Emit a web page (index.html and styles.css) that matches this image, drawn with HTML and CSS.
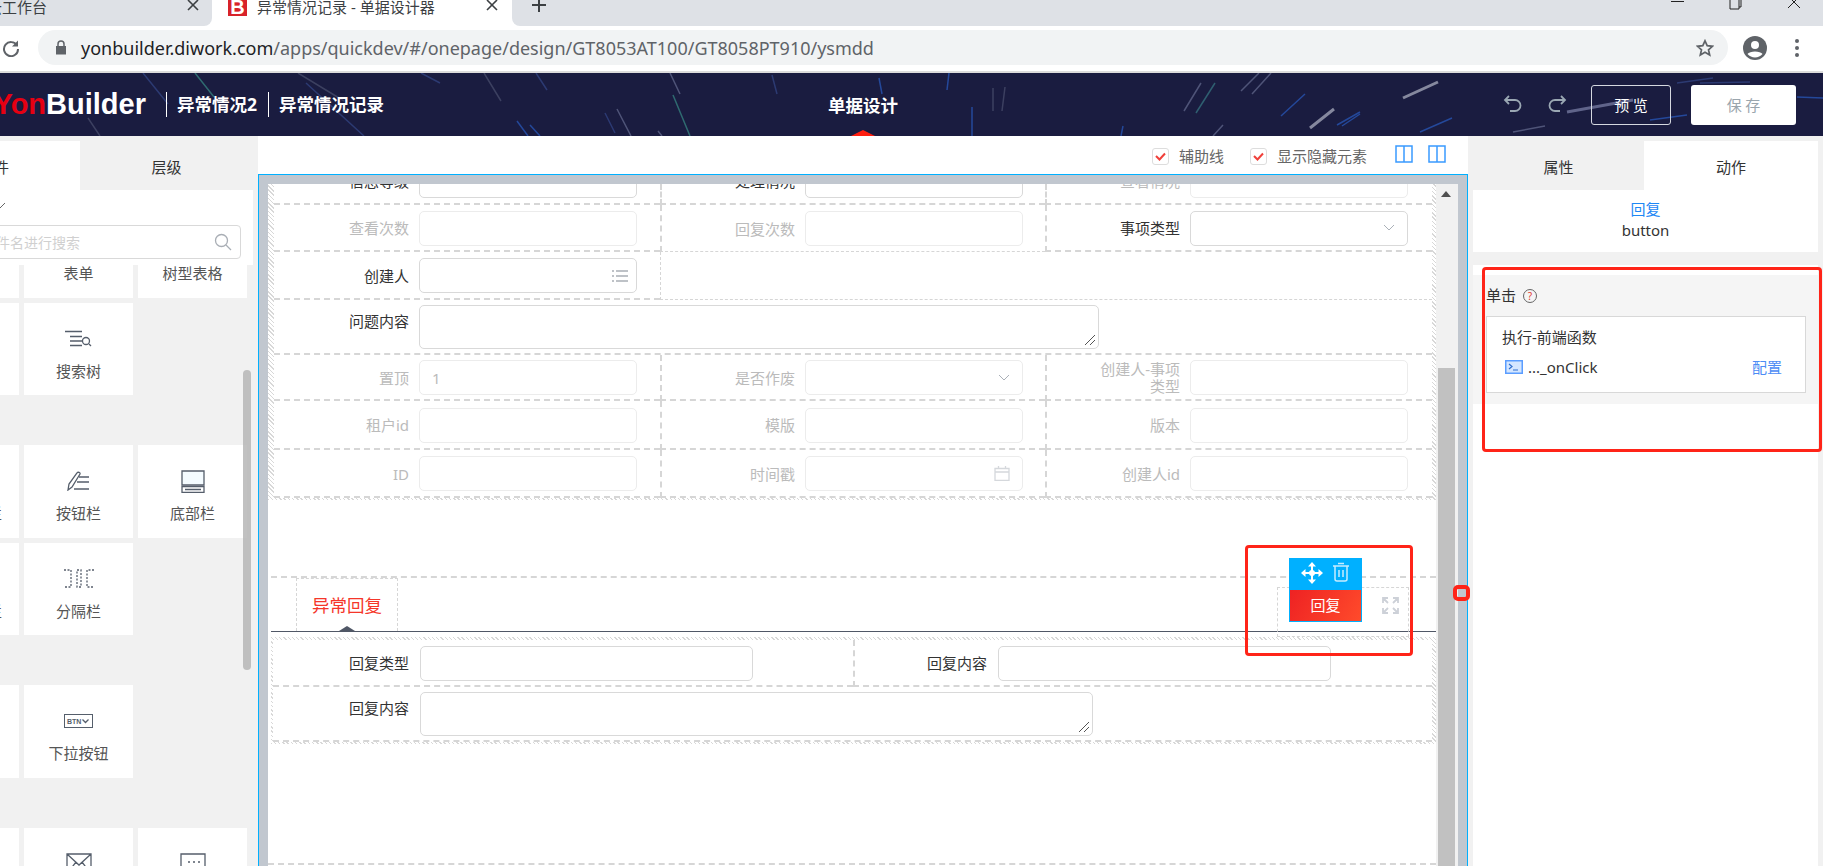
FILE: index.html
```html
<!DOCTYPE html>
<html lang="en">
<head>
    <meta charset="UTF-8">
    <title>异常情况记录 - 单据设计器</title>
    <link rel="stylesheet" href="styles.css">
</head>
<body>
    <!-- browser chrome -->
    <div class="tabstrip">
        <div class="tab-old">
            <span class="tab-old-text">云工作台</span>
            <svg class="tab-x" width="12" height="12" viewBox="0 0 12 12"><path d="M1 1l10 10M11 1L1 11"/></svg>
        </div>
        <div class="tab-on">
            <span class="favicon">B</span>
            <span class="tab-title">异常情况记录 - 单据设计器</span>
            <svg class="tab-x" width="12" height="12" viewBox="0 0 12 12"><path d="M1 1l10 10M11 1L1 11"/></svg>
        </div>
        <div class="tab-rest">
            <svg class="tab-plus" width="16" height="16" viewBox="0 0 16 16"><path d="M8 1v14M1 8h14"/></svg>
            <div class="win-btns">
                <svg width="14" height="8" viewBox="0 0 14 8"><path d="M0 1.500h13"/></svg>
                <svg width="14" height="10" viewBox="0 0 14 10"><path d="M1 0v9h9V0M10 7h2V0"/></svg>
                <svg width="14" height="9" viewBox="0 0 14 9"><path d="M1 -4l12 12M13 -4L1 8"/></svg>
            </div>
        </div>
    </div>
    <div class="addr-row">
        <svg class="reload" width="18" height="18" viewBox="0 0 18 18"><path d="M15 6.500A7 7 0 1 0 16 10" /><path class="solid" d="M16 1.500v6h-6z"/></svg>
        <div class="addr-bar">
            <svg width="12" height="15" viewBox="0 0 12 15" class="lock"><path d="M1 6h10v8.500H1z"/><path class="ring" d="M3 6V4a3 3 0 0 1 6 0v2"/></svg>
            <span class="url"><b>yonbuilder.diwork.com</b>/apps/quickdev/#/onepage/design/GT8053AT100/GT8058PT910/ysmdd</span>
            <svg class="star" width="18" height="18" viewBox="0 0 18 18"><path d="M9 1.800l2.200 4.900 5.300.6-4 3.500 1.200 5.200L9 13.300 4.300 16l1.200-5.200-4-3.500 5.300-.6z"/></svg>
        </div>
        <svg class="avatar" width="24" height="24" viewBox="0 0 24 24"><circle cx="12" cy="12" r="12" fill="#5f6368"/><circle cx="12" cy="9" r="4" fill="#fff"/><path d="M4.500 18c2-3.400 13-3.400 15 0a10 10 0 0 1-15 0z" fill="#fff"/></svg>
        <div class="dots"><i></i><i></i><i></i></div>
    </div>

    <!-- app header -->
    <header class="app-head">
        <svg class="streaks" width="1823" height="63" viewBox="0 0 1823 63">
            <g fill="none" stroke-width="1.500">
                <path stroke="#2c3a72" d="M143 0l25 31M306 10l58 53M421 0l19 10M536 0l11 17M605 40l10 20M772 2l5 19"/>
                <path stroke="#2f6a70" d="M195 0l19 24M673 22l17 41"/>
                <path stroke="#3c4060" d="M88 45l12 18M298 0l46 28M484 0l17 28M993 15v23M1005 14l-3 24"/>
                <path stroke="#24489a" d="M517 48l11 15M530 52l10 11M879 5l3 16M949 0l-2 17M972 34v29M1123 53l-2 10M1305 21l-24 22M1360 41l-18 12M1360 39l-23 13M1452 45l-32 14M1687 42l-37 5M1823 25l-26-1"/>
                <path stroke="#4f5478" d="M670 0l10 21M617 36l14 27M658 58l4 5M1201 10l-17 28M1259 0l-18 18M1271 0l-19 21M1223 52l-10 11M1545 53l-32 6"/>
                <path stroke="#2f5f70" d="M1215 10l-19 30"/>
                <path stroke="#2c3a72" d="M1713 5l-36 5M1750 9l-50 1"/>
                <path stroke="#85889e" stroke-width="3" d="M1334 36l-24 19M1438 9l-35 16"/>
                <path stroke="#60648a" stroke-width="3" d="M1633 27l-66 12"/>
            </g>
        </svg>
        <div class="head-left">
            <div class="logo"><span class="logo-red">Yon</span>Builder</div>
            <div class="crumb">异常情况2</div>
            <div class="crumb">异常情况记录</div>
        </div>
        <div class="head-title">单据设计<span class="title-mark"></span></div>
        <div class="head-right">
            <svg class="undo" width="20" height="20" viewBox="0 0 20 20"><path d="M6 1L2 5l4 4M2 5h10a5.500 5.500 0 0 1 0 11H7"/></svg>
            <svg class="undo redo" width="20" height="20" viewBox="0 0 20 20"><path d="M14 1l4 4-4 4M18 5H8a5.500 5.500 0 0 0 0 11h5"/></svg>
            <button class="btn-ghost">预 览</button>
            <button class="btn-save">保 存</button>
        </div>
    </header>

    <div class="main">
        <!-- left palette -->
        <aside class="left">
            <div class="l-tabs">
                <div class="l-tab on"><span class="l-tab-cut">组件</span></div>
                <div class="l-tab">层级</div>
            </div>
            <div class="l-top">
                <svg class="l-chev" width="8" height="8" viewBox="0 0 8 8"><path d="M-3 2l3 4 5-5"/></svg>
                <div class="search">
                    <span class="search-text">输入组件名进行搜索</span>
                    <svg width="18" height="18" viewBox="0 0 18 18"><circle cx="7.500" cy="7.500" r="6"/><path d="M12 12l5 5"/></svg>
                </div>
            </div>
            <div class="palette">
                <div class="pal-scroll">
                    <div class="pal-grid">
                        <div class="pal"></div><div class="pal"><span class="pal-ico"></span><span>表单</span></div><div class="pal"><span class="pal-ico"></span><span>树型表格</span></div>
                        <div class="pal"></div>
                        <div class="pal">
                            <span class="pal-ico"><svg width="28" height="18" viewBox="0 0 28 18"><path d="M0 1.500h17M5 6.500h12M5 11h12M5 15.500h12"/><circle cx="21" cy="11" r="3.500"/><path d="M24 14l2 2"/></svg></span>
                            <span>搜索树</span>
                        </div>
                        <div class="pal-empty"></div>
                    </div>
                    <div class="pal-grid sect">
                        <div class="pal"><span class="pal-ico"></span><span>卡片工具栏</span></div>
                        <div class="pal">
                            <span class="pal-ico"><svg width="23" height="20" viewBox="0 0 23 20"><path d="M1 19l1-6L10 2c1-1.500 3.500-.5 3 1L5 16z"/><path d="M12 6h10M10 11h12M7 18h15"/></svg></span>
                            <span>按钮栏</span>
                        </div>
                        <div class="pal">
                            <span class="pal-ico"><svg width="24" height="23" viewBox="0 0 24 23"><path class="pane" d="M1 1h22v14H1z"/><path d="M1 16.500h22v6H1zM4 19.500h16"/></svg></span>
                            <span>底部栏</span>
                        </div>
                        <div class="pal"><span class="pal-ico"></span><span>列表工具栏</span></div>
                        <div class="pal">
                            <span class="pal-ico"><svg class="dash" width="30" height="19" viewBox="0 0 30 19"><path d="M0 1h7v17H0M13 1h4v17h-4zM30 1h-7v17h7"/></svg></span>
                            <span>分隔栏</span>
                        </div>
                        <div class="pal-empty"></div>
                    </div>
                    <div class="pal-grid sect">
                        <div class="pal"></div>
                        <div class="pal">
                            <span class="pal-ico">
                                <span class="btn-ico">BTN<svg width="7" height="5" viewBox="0 0 7 5"><path d="M.500.500l3 3 3-3"/></svg></span>
                            </span>
                            <span>下拉按钮</span>
                        </div>
                        <div class="pal-empty"></div>
                    </div>
                    <div class="pal-grid sect">
                        <div class="pal"></div>
                        <div class="pal"><span class="pal-ico"><svg width="26" height="22" viewBox="0 0 26 22"><path d="M1 1h24v20H1zM1 1l12 11L25 1M1 21l9-12M25 21l-9-12"/></svg></span></div>
                        <div class="pal"><span class="pal-ico"><svg width="26" height="22" viewBox="0 0 26 22"><path d="M1 21V1h24v20"/><path d="M8 9h2M13 9h2M18 9h2"/></svg></span></div>
                    </div>
                </div>
                <div class="pal-bar"></div>
            </div>
        </aside>

        <!-- design canvas -->
        <section class="center">
            <div class="toolbar">
                <span class="chk"><svg width="11" height="9" viewBox="0 0 11 9"><path d="M1 4l3.500 3.500L10 1.500"/></svg></span>
                <span class="chk-label">辅助线</span>
                <span class="chk second"><svg width="11" height="9" viewBox="0 0 11 9"><path d="M1 4l3.500 3.500L10 1.500"/></svg></span>
                <span class="chk-label">显示隐藏元素</span>
                <svg class="split first" width="18" height="18" viewBox="0 0 18 18"><path d="M1 1h16v16H1zM9 1v16"/></svg>
                <svg class="split" width="18" height="18" viewBox="0 0 18 18"><path d="M1 1h16v16H1zM9 1v16"/></svg>
            </div>
            <div class="canvas">
                <div class="canvas-in">
                    <div class="sheet">
                        <div class="hatch">
                            <div class="frow">
                                <div class="cell"><span class="lbl">信息等级</span><div class="inp"></div></div>
                                <div class="cell"><span class="lbl">处理情况</span><div class="inp"></div></div>
                                <div class="cell"><span class="lbl off">查看情况</span><div class="inp off"></div></div>
                            </div>
                            <div class="frow">
                                <div class="cell"><span class="lbl off">查看次数</span><div class="inp off"></div></div>
                                <div class="cell thin-b"><span class="lbl off">回复次数</span><div class="inp off"></div></div>
                                <div class="cell">
                                    <span class="lbl">事项类型</span>
                                    <div class="inp"><svg class="chev" width="12" height="8" viewBox="0 0 12 8"><path d="M1 1l5 5 5-5"/></svg></div>
                                </div>
                            </div>
                            <div class="frow">
                                <div class="cell">
                                    <span class="lbl">创建人</span>
                                    <div class="inp"><svg class="list-ico" width="16" height="14" viewBox="0 0 16 14"><path d="M0 2h2M4 2h12M0 7h2M4 7h12M0 12h2M4 12h12"/></svg></div>
                                </div>
                                <div class="cell blank"></div>
                            </div>
                            <div class="frow wide">
                                <div class="cell top">
                                    <span class="lbl">问题内容</span>
                                    <div class="ta ta-1"><svg width="12" height="12" viewBox="0 0 12 12"><path d="M1 11L11 1M6 11l5-5"/></svg></div>
                                </div>
                            </div>
                            <div class="frow">
                                <div class="cell"><span class="lbl off">置顶</span><div class="inp off"><span class="val">1</span></div></div>
                                <div class="cell">
                                    <span class="lbl off">是否作废</span>
                                    <div class="inp off"><svg class="chev" width="12" height="8" viewBox="0 0 12 8"><path d="M1 1l5 5 5-5"/></svg></div>
                                </div>
                                <div class="cell"><span class="lbl off two">创建人-事项<br>类型</span><div class="inp off"></div></div>
                            </div>
                            <div class="frow">
                                <div class="cell"><span class="lbl off">租户id</span><div class="inp off"></div></div>
                                <div class="cell"><span class="lbl off">模版</span><div class="inp off"></div></div>
                                <div class="cell"><span class="lbl off">版本</span><div class="inp off"></div></div>
                            </div>
                            <div class="frow">
                                <div class="cell"><span class="lbl off">ID</span><div class="inp off"></div></div>
                                <div class="cell">
                                    <span class="lbl off">时间戳</span>
                                    <div class="inp off"><svg class="cal" width="16" height="15" viewBox="0 0 16 15"><path d="M1 2.500h14v12H1zM1 6h14M4.500 0v3M11.500 0v3"/></svg></div>
                                </div>
                                <div class="cell"><span class="lbl off">创建人id</span><div class="inp off"></div></div>
                            </div>
                        </div>

                        <div class="tab-head">
                            <div class="sub-tab">异常回复<span class="sub-mark"></span></div>
                            <div class="act-box">
                                <div class="act-tools">
                                    <svg width="22" height="22" viewBox="0 0 22 22"><path class="mv-line" d="M11 3v16M3 11h16"/><path d="M11 0l4 4.500H7zM11 22l-4-4.500h8zM0 11l4.500-4v8zM22 11l-4.500 4V7z"/><circle cx="11" cy="11" r="3"/></svg>
                                    <svg class="trash" width="18" height="20" viewBox="0 0 18 20"><path d="M1 4h16M6 1.500h6M3 4v13c0 1 1 2 2 2h8c1 0 2-1 2-2V4M7 8v7M11 8v7"/></svg>
                                </div>
                                <div class="act-btn">回复</div>
                                <svg class="expand" width="17" height="17" viewBox="0 0 17 17"><path d="M1 6V1h5M1 1l5 5M11 1h5v5M16 1l-5 5M16 11v5h-5M16 16l-5-5M6 16H1v-5M1 16l5-5"/></svg>
                            </div>
                        </div>

                        <div class="hatch sub-form">
                            <div class="frow2">
                                <div class="cell"><span class="lbl">回复类型</span><div class="inp long"></div></div>
                                <div class="cell"><span class="lbl">回复内容</span><div class="inp long"></div></div>
                            </div>
                            <div class="frow2 wide">
                                <div class="cell top">
                                    <span class="lbl">回复内容</span>
                                    <div class="ta ta-2"><svg width="12" height="12" viewBox="0 0 12 12"><path d="M1 11L11 1M6 11l5-5"/></svg></div>
                                </div>
                            </div>
                        </div>
                        <div class="sheet-end"></div>
                    </div>
                    <div class="vbar">
                        <span class="vbar-up"></span>
                        <div class="vbar-thumb"></div>
                    </div>
                </div>
            </div>
        </section>

        <!-- right props -->
        <aside class="right">
            <div class="r-tabs">
                <div class="r-tab">属性</div>
                <div class="r-tab on">动作</div>
            </div>
            <div class="r-info">
                <div class="r-name">回复</div>
                <div>button</div>
            </div>
            <div class="r-body">
                <div class="r-grey">
                    <div class="r-event">单击 <span class="help">?</span></div>
                    <div class="r-card">
                        <div>执行-前端函数</div>
                        <div class="r-func">
                            <svg width="18" height="14" viewBox="0 0 18 14"><path class="fn-box" d="M.750.750h16.500v12.500H.750z"/><path class="fn-in" d="M4 4l3 2.500L4 9M8 10h5"/></svg>
                            <span class="r-fn-name">..._onClick</span>
                            <span class="r-conf">配置</span>
                        </div>
                    </div>
                </div>
            </div>
        </aside>
    </div>

    <!-- red marks drawn on the screenshot -->
    <div class="mark mark-btn"></div>
    <div class="mark mark-panel"></div>
    <div class="mark mark-dot"></div>
</body>
</html>
```

FILE: styles.css
```css
* {
    box-sizing: border-box;
}

html, body {
    margin: 0;
    height: 866px;
    overflow: hidden;
}

body {
    position: relative;
    background: #fff;
    font-family: "Noto Sans", "Noto Sans CJK SC", sans-serif;
    font-size: 15px;
    color: #333;
}

/* browser tabs */
.tabstrip {
    display: flex;
    height: 26px;
    overflow: hidden;
    background: #fff;
    font-size: 15px;
    color: #3c4043;
}

.tab-old {
    width: 212px;
    display: flex;
    background: #dee1e6;
    border-radius: 0 0 8px 0;
}

.tab-old-text {
    margin: -3px 0 0 -13px;
    line-height: 20px;
    white-space: nowrap;
}

.tab-x {
    fill: none;
    stroke: #3c4043;
    stroke-width: 1.600;
}

.tab-old .tab-x {
    margin-left: 140px;
    margin-top: -1px;
}

.tab-on {
    width: 300px;
    display: flex;
}

.favicon {
    width: 19px;
    height: 16px;
    margin: 0 0 0 16px;
    background: #d8232a;
    color: #fff;
    font: bold 20px/15px "Liberation Sans", sans-serif;
    text-align: center;
}

.tab-title {
    margin: -3px 0 0 10px;
    width: 229px;
    line-height: 20px;
    white-space: nowrap;
}

.tab-on .tab-x {
    margin-top: -1px;
}

.tab-rest {
    flex: 1;
    display: flex;
    background: #dee1e6;
    border-radius: 0 0 0 8px;
}

.tab-plus {
    margin: -3px 0 0 19px;
    fill: none;
    stroke: #3c4043;
    stroke-width: 2;
}

.win-btns {
    margin-left: auto;
    display: flex;
    gap: 44px;
    padding-right: 22px;
}

.win-btns svg {
    fill: none;
    stroke: #222;
}

/* address bar */
.addr-row {
    height: 47px;
    padding: 5px 0 7px;
    display: flex;
    align-items: center;
    border-bottom: 2px solid #dcdcdc;
}

.reload {
    margin-left: 2px;
    fill: none;
    stroke: #5f6368;
    stroke-width: 2;
}

.reload .solid {
    fill: #5f6368;
    stroke: none;
}

.addr-bar {
    width: 1690px;
    height: 35px;
    margin-left: 18px;
    padding: 0 14px 0 17px;
    display: flex;
    align-items: center;
    background: #f1f3f4;
    border-radius: 18px;
}

.lock path {
    fill: #5f6368;
}

.lock .ring {
    fill: none;
    stroke: #5f6368;
    stroke-width: 1.500;
}

.url {
    margin-left: 14px;
    font-size: 18px;
    color: #5f6368;
    white-space: nowrap;
}

.url b {
    font-weight: normal;
    color: #202124;
}

.star {
    margin-left: auto;
    fill: none;
    stroke: #5f6368;
    stroke-width: 1.700;
}

.avatar {
    margin-left: 15px;
}

.dots {
    margin-left: 28px;
    display: flex;
    flex-direction: column;
    gap: 3px;
}

.dots i {
    width: 4px;
    height: 4px;
    border-radius: 50%;
    background: #5f6368;
}

/* app header */
.app-head {
    position: relative;
    height: 63px;
    display: flex;
    align-items: center;
    overflow: hidden;
    background: #1a1c40;
    color: #fff;
}

.streaks {
    position: absolute;
    left: 0;
    top: 0;
    filter: blur(0.5px);
}

.head-left {
    position: relative;
    width: 828px;
    display: flex;
    align-items: center;
}

.logo {
    width: 146px;
    display: flex;
    justify-content: flex-end;
    white-space: nowrap;
    font: bold 29px "Liberation Sans", sans-serif;
}

.logo-red {
    color: #e60012;
}

.crumb {
    height: 25px;
    line-height: 25px;
    padding-left: 10px;
    border-left: 1px solid #fff;
    font-size: 17.500px;
    font-weight: bold;
    white-space: nowrap;
}

.logo + .crumb {
    margin-left: 20px;
    margin-right: 11px;
}

.head-title {
    position: relative;
    font-size: 17.500px;
    font-weight: bold;
    white-space: nowrap;
}

.title-mark {
    position: absolute;
    left: 23px;
    top: 38px;
    border: 12px solid transparent;
    border-top: 0;
    border-bottom: 6px solid #ff1f10;
}

.head-right {
    position: relative;
    margin-left: auto;
    padding-right: 27px;
    display: flex;
    align-items: center;
}

.undo {
    margin-right: 24px;
    fill: none;
    stroke: #9aa7b3;
    stroke-width: 1.800;
}

.redo {
    margin-right: 24px;
}

.btn-ghost, .btn-save {
    height: 40px;
    border-radius: 3px;
    font: 15px "Noto Sans CJK SC", sans-serif;
}

.btn-ghost {
    width: 80px;
    background: transparent;
    border: 1px solid #d5d8e0;
    color: #fff;
}

.btn-save {
    width: 105px;
    margin-left: 20px;
    background: #fff;
    border: 0;
    color: #9aa5ad;
}

/* body columns */
.main {
    height: 730px;
    display: flex;
    overflow: hidden;
}

.left {
    width: 258px;
    flex: none;
    display: flex;
    flex-direction: column;
    background: #f1f1f1;
}

.l-tabs {
    width: 253px;
    height: 54px;
    display: flex;
}

.l-tab {
    flex: 1;
    display: flex;
    align-items: center;
    justify-content: center;
    padding-top: 6px;
}

.l-tab.on {
    flex: none;
    width: 80px;
    margin-top: 5px;
    padding-top: 1px;
    justify-content: flex-start;
    background: #fff;
}

.l-tab-cut {
    margin-left: -21px;
}

.l-top {
    width: 253px;
    height: 75px;
    background: #fff;
    flex: none;
}

.l-chev {
    display: block;
    margin-top: 12px;
    fill: none;
    stroke: #666;
}

.search {
    width: 248px;
    height: 34px;
    margin: 15px 0 0 -7px;
    padding: 0 8px 0 0;
    display: flex;
    align-items: center;
    justify-content: space-between;
    border: 1px solid #d9d9d9;
    border-radius: 4px;
}

.search-text {
    margin-left: -40px;
    font-size: 14px;
    color: #d0d0d0;
    white-space: nowrap;
}

.search svg {
    fill: none;
    stroke: #a9aeb5;
    stroke-width: 1.300;
}

.palette {
    position: relative;
    flex: 1;
    overflow: hidden;
}

.pal-scroll {
    margin: -60px 0 0 -90px;
}

.pal-grid {
    display: grid;
    grid-template-columns: repeat(3, 109px);
    grid-auto-rows: 92.500px;
    gap: 5px;
}

.pal-grid.sect {
    margin-top: 50px;
}

.pal {
    padding-top: 22px;
    display: flex;
    flex-direction: column;
    align-items: center;
    background: #fff;
    white-space: nowrap;
    color: #555;
}

.pal-ico {
    height: 28px;
    margin-bottom: 8px;
    display: flex;
    align-items: center;
    justify-content: center;
}

.pal-ico svg {
    fill: none;
    stroke: #555e6b;
    stroke-width: 1.300;
}

.pal-ico svg.dash {
    stroke-dasharray: 2 1.500;
}

.pal-ico .pane {
    fill: #f4fbff;
}

.pal > span:last-child {
    line-height: 20px;
}

.btn-ico {
    width: 29px;
    height: 14px;
    padding-left: 2px;
    display: flex;
    align-items: center;
    gap: 1px;
    border: 1px solid #555e6b;
    font: bold 7px "Liberation Sans", sans-serif;
    color: #555e6b;
}

.pal-bar {
    position: absolute;
    left: 243px;
    top: 105px;
    width: 8px;
    height: 300px;
    border-radius: 4px;
    background: rgba(182, 182, 182, 0.85);
}

/* canvas */
.center {
    width: 1210px;
    flex: none;
    display: flex;
    flex-direction: column;
}

.toolbar {
    height: 38px;
    padding: 8px 22px 0 0;
    display: flex;
    align-items: flex-start;
    justify-content: flex-end;
    color: #666;
    line-height: 24px;
}

.chk {
    width: 17px;
    height: 17px;
    margin-top: 4px;
    display: flex;
    align-items: center;
    justify-content: center;
    border: 1px solid #ddd;
    border-radius: 3px;
}

.chk svg {
    fill: none;
    stroke: #f0403a;
    stroke-width: 2;
}

.chk.second {
    margin-left: 26px;
}

.chk-label {
    margin-left: 10px;
}

.split {
    margin: 1px 0 0 15px;
    fill: none;
    stroke: #3a9bff;
    stroke-width: 1.500;
}

.split.first {
    margin-left: 28px;
}

.canvas {
    flex: 1;
    min-height: 0;
    padding: 9px 9px 0 9px;
    border: 1px solid #00b0ff;
    border-bottom: 0;
    background: #c1c7cf;
}

.canvas-in {
    height: 100%;
    display: flex;
    overflow: hidden;
    background: #fff;
}

.sheet {
    width: 1168px;
    flex: none;
}

.hatch {
    padding: 0 4px 2px 6px;
    background: repeating-linear-gradient(45deg, #d8d8d8 0 1px, #fff 1px 3px);
}

.frow, .frow2 {
    display: grid;
    grid-template-rows: minmax(0, 1fr);
    background: #fff;
    overflow: hidden;
}

.frow {
    grid-template-columns: 386px 385px 387px;
}

.frow.wide, .frow2.wide {
    grid-template-columns: 1fr;
}

.frow:nth-child(1) { height: 21px; }
.frow:nth-child(2) { height: 47px; }
.frow:nth-child(3) { height: 48px; }
.frow:nth-child(4) { height: 55px; }
.frow:nth-child(5) { height: 46px; }
.frow:nth-child(6) { height: 49px; }
.frow:nth-child(7) { height: 48px; }

.cell {
    display: flex;
    align-items: center;
    min-width: 0;
    min-height: 0;
    overflow: hidden;
    padding-top: 1px;
    border-bottom: 2px dashed #d6d6d6;
}

.cell + .cell {
    border-left: 2px dashed #d6d6d6;
}

.frow:first-child .cell {
    padding-top: 0;
    align-items: flex-end;
    padding-bottom: 5px;
}

.frow:first-child .lbl {
    margin-bottom: 7px;
}

.frow:first-child .inp {
    height: 34px;
    flex: none;
}

.cell.thin-b {
    border-bottom-width: 1px;
}

.cell.blank {
    grid-column: span 2;
    border-left-width: 1px;
    border-bottom-width: 1px;
}

.cell.top {
    align-items: flex-start;
    padding-top: 5px;
}

.cell.top .lbl {
    margin-top: 6px;
}

.lbl {
    width: 135px;
    flex: none;
    line-height: 20px;
    text-align: right;
    color: #333;
    white-space: nowrap;
}

.lbl.off {
    color: #bbb;
}

.lbl.two {
    line-height: 17px;
}

.cell + .cell .lbl {
    width: 133px;
}

.inp {
    width: 218px;
    height: 35px;
    margin-left: 10px;
    padding: 0 12px;
    display: flex;
    flex: none;
    align-items: center;
    justify-content: flex-end;
    border: 1px solid #d9d9d9;
    border-radius: 5px;
}

.cell + .cell .inp {
    margin-left: 10px;
}

.inp.off {
    border-color: #ececec;
}

.inp.long, .cell + .cell .inp.long {
    width: 333px;
    margin-left: 11px;
}

.val {
    margin-right: auto;
    color: #bbb;
}

.chev, .list-ico, .cal {
    fill: none;
    stroke-width: 1;
}

.chev {
    stroke: #aab0b8;
}

.list-ico {
    margin-right: -4px;
    stroke: #a9aeb5;
    stroke-width: 1.500;
}

.cal {
    stroke: #d5d8dc;
    stroke-width: 1.300;
}

.ta {
    height: 44px;
    margin-left: 10px;
    padding: 0 2px 2px 0;
    display: flex;
    align-items: flex-end;
    justify-content: flex-end;
    border: 1px solid #d9d9d9;
    border-radius: 5px;
}

.ta svg {
    fill: none;
    stroke: #555;
    stroke-width: 1;
}

.ta-1 {
    width: 680px;
}

.ta-2 {
    width: 673px;
    margin-left: 11px;
}

.tab-head {
    position: relative;
    height: 56px;
    margin: 76px 0 5px 3px;
    padding-left: 25px;
    border-top: 2px dashed #d6d6d6;
    border-bottom: 1px solid #505766;
}

.sub-tab {
    position: relative;
    width: 102px;
    height: 53px;
    padding-top: 13px;
    border: 1px dashed #d6d6d6;
    border-bottom: 0;
    font-size: 17.500px;
    line-height: 26px;
    text-align: center;
    color: #f5362a;
}

.sub-mark {
    position: absolute;
    left: 42px;
    bottom: 0;
    border: 8px solid transparent;
    border-top: 0;
    border-bottom: 5px solid #505766;
}

.act-box {
    position: absolute;
    left: 1006px;
    top: 9px;
    width: 132px;
    height: 50px;
    border: 1px dashed #d6d6d6;
}

.act-tools {
    position: absolute;
    left: 11px;
    top: -30px;
    width: 73px;
    height: 31px;
    padding: 4px 12px 0;
    display: flex;
    justify-content: space-between;
    background: #00b0ff;
}

.act-tools svg {
    fill: #fff;
}

.act-tools .mv-line {
    stroke: #fff;
    stroke-width: 2;
}

.act-tools .trash {
    fill: none;
    stroke: #c6ecff;
    stroke-width: 1.500;
}

.act-btn {
    position: absolute;
    left: 11px;
    top: 1px;
    width: 73px;
    height: 33px;
    border: 1px solid #00b0ff;
    background: linear-gradient(120deg, #ee2223, #ff4b2b);
    color: #fff;
    font-size: 15px;
    line-height: 31px;
    text-align: center;
}

.expand {
    position: absolute;
    left: 104px;
    top: 9px;
    fill: none;
    stroke: #cdd1d8;
    stroke-width: 1.800;
}

.sub-form {
    margin-left: 3px;
    padding: 3px 4px 2px 2px;
}

.frow2 {
    grid-template-columns: 580px 579px;
}

.frow2:nth-child(1) { height: 47px; }
.frow2:nth-child(2) { height: 55px; }

.sub-form .lbl {
    width: 136px;
}

.frow2 .cell + .cell .lbl {
    width: 132px;
}

.sheet-end {
    height: 121px;
    border-bottom: 2px dashed #d6d6d6;
}

.vbar {
    position: relative;
    width: 22px;
    flex: none;
    background: #f1f1f1;
}

.vbar-up {
    position: absolute;
    left: 5px;
    top: 7px;
    border: 5px solid transparent;
    border-top: 0;
    border-bottom: 6px solid #505050;
}

.vbar-thumb {
    position: absolute;
    left: 2px;
    top: 184px;
    width: 17px;
    bottom: 0;
    background: #c1c1c1;
}

/* right panel */
.right {
    flex: 1;
    min-width: 0;
    display: flex;
    flex-direction: column;
    padding: 0 5px;
    background: #f1f1f1;
}

.r-tabs {
    height: 54px;
    display: flex;
    flex: none;
}

.r-tab {
    flex: 1;
    display: flex;
    align-items: center;
    justify-content: center;
    padding-top: 6px;
}

.r-tab.on {
    margin-top: 5px;
    padding-top: 1px;
    background: #fff;
}

.r-tab:first-child {
    flex: none;
    width: 171px;
}

.r-info {
    height: 62px;
    flex: none;
    padding-top: 9px;
    background: #fff;
    text-align: center;
    line-height: 21px;
}

.r-name {
    color: #1e88f5;
}

.r-body {
    flex: 1;
    margin-top: 13px;
    padding-top: 10px;
    background: #fff;
}

.r-grey {
    height: 129px;
    padding: 9px 12px 0 13px;
    background: #f5f5f5;
}

.r-event {
    height: 32px;
    line-height: 22px;
}

.help {
    display: inline-block;
    width: 14px;
    height: 14px;
    margin-left: 3px;
    border: 1px solid #666;
    border-radius: 50%;
    font-size: 10px;
    line-height: 12px;
    text-align: center;
    vertical-align: 1px;
    color: #e23a2e;
}

.r-card {
    height: 77px;
    padding: 9px 15px 0;
    background: #fff;
    border: 1px solid #d8d8d8;
    line-height: 22px;
}

.r-func {
    margin-top: 8px;
    padding-left: 3px;
    display: flex;
    align-items: center;
}

.fn-box {
    fill: #d4e6ff;
    stroke: #5b9dff;
    stroke-width: 1.500;
}

.fn-in {
    fill: none;
    stroke: #2f6fd0;
    stroke-width: 1.200;
}

.r-fn-name {
    margin-left: 5px;
}

.r-conf {
    margin-left: auto;
    margin-right: 8px;
    color: #4d8cf5;
}

/* red marks */
.mark {
    position: absolute;
    border: 3px solid #ff2418;
    border-radius: 4px;
}

.mark-btn {
    left: 1245px;
    top: 545px;
    width: 168px;
    height: 111px;
}

.mark-panel {
    left: 1482px;
    top: 267px;
    width: 340px;
    height: 185px;
}

.mark-dot {
    left: 1453px;
    top: 585px;
    width: 17px;
    height: 16px;
    border-width: 4px;
    border-radius: 5px;
}
```
